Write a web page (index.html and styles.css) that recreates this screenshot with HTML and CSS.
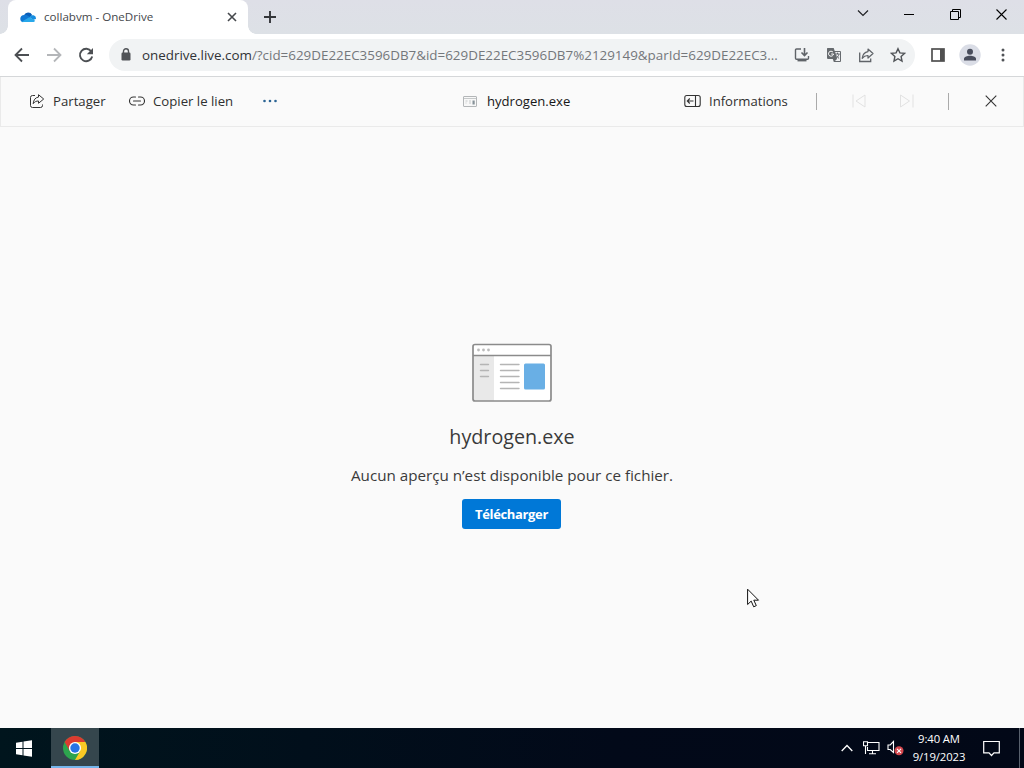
FILE: index.html
```html
<!DOCTYPE html>
<html lang="fr">
<head>
<meta charset="utf-8">
<title>collabvm - OneDrive</title>
<link rel="stylesheet" href="styles.css">
</head>
<body>
<div class="desktop">
  <header class="tabstrip">
    <div class="tab">
      <svg class="cloud" width="16" height="16" viewBox="0 0 16 16"><path d="M4 6.2A4.6 4.6 0 0 1 12.2 6L9 9 4 7z" fill="#0a5fb8"/><path d="M4.1 5.9c1.5-.3 2.6.1 3.7.8l3 1.9L3 13.2A3.6 3.6 0 0 1 .3 9.500C.3 7.500 2 5.900 4.100 5.900z" fill="#0f78d4"/><path d="M9.600 7.900c1.300-1.900 3.400-2 4.500-1.300A3 3 0 0 1 15.900 9.900l-3 1z" fill="#168de0"/><path d="M2 12.500l7.300-4.300 5.900 3.500c-.5.900-1.300 1.400-2.400 1.400H4c-.8 0-1.500-.2-2-.6z" fill="#28a8ea"/></svg>
      <span class="tab-title">collabvm - OneDrive</span>
      <svg class="tab-close" width="10" height="10" viewBox="0 0 10 10"><path d="M1 1l8 8M9 1L1 9" stroke="#45484c" stroke-width="1.600" fill="none"/></svg>
    </div>
    <svg class="new-tab" width="12" height="12" viewBox="0 0 12 12"><path d="M6 0v12M0 6h12" stroke="#34363a" stroke-width="1.900"/></svg>
    <div class="window-controls">
      <span><svg width="12" height="8" viewBox="0 0 12 8"><path d="M1 1.500l5 5 5-5" stroke="#202124" stroke-width="1.200" fill="none"/></svg></span>
      <span><svg width="10" height="10" viewBox="0 0 10 10"><path d="M0 5.500h10" stroke="#000"/></svg></span>
      <span><svg width="11" height="11" viewBox="0 0 11 11"><path d="M.5 2.500h8v8h-8zM2.500 2.500v-2h8v8h-2" stroke="#000" fill="none"/></svg></span>
      <span><svg width="11" height="11" viewBox="0 0 11 11"><path d="M.5.5l10 10M10.500.5l-10 10" stroke="#000" stroke-width="1.100"/></svg></span>
    </div>
  </header>

  <nav class="browser-bar">
    <div class="nav-buttons">
      <svg width="16" height="16" viewBox="0 0 16 16"><path d="M15 8H2M8 1.500L1.500 8 8 14.500" stroke="#4c4f53" stroke-width="1.800" fill="none"/></svg>
      <svg width="16" height="16" viewBox="0 0 16 16"><path d="M1 8h13M8 1.500L14.500 8 8 14.500" stroke="#b4b6b9" stroke-width="1.800" fill="none"/></svg>
      <svg width="16" height="16" viewBox="0 0 16 16"><path d="M13.300 4.500A6.200 6.200 0 1 0 14.200 9.500" stroke="#4c4f53" stroke-width="1.900" fill="none"/><path d="M15 1v6.200H8.800z" fill="#4c4f53"/></svg>
    </div>
    <div class="omnibox">
      <svg class="lock" width="10" height="13" viewBox="0 0 10 13"><rect x="0.500" y="4.500" width="9" height="8" rx="1.200" fill="#505357"/><path d="M2.500 5V3.300a2.500 2.500 0 0 1 5 0V5" stroke="#505357" stroke-width="1.400" fill="none"/></svg>
      <span class="url"><b>onedrive.live.com</b>/?cid=629DE22EC3596DB7&amp;id=629DE22EC3596DB7%2129149&amp;parId=629DE22EC3...</span>
      <div class="omni-actions">
        <svg width="16" height="16" viewBox="0 0 16 16"><path d="M7 2H2.500a1 1 0 0 0-1 1v8.200a1 1 0 0 0 1 1h11a1 1 0 0 0 1-1V9" stroke="#5f6368" stroke-width="1.400" fill="none"/><path d="M3.500 12h9v2.400h-9z" fill="#5f6368"/><path d="M10.500 1v7M7.500 5.500l3 3 3-3" stroke="#5f6368" stroke-width="1.600" fill="none"/></svg>
        <svg width="16" height="16" viewBox="0 0 16 16"><path d="M1.500 1h6.200l1 3h5.300a1 1 0 0 1 1 1v9a1 1 0 0 1-1 1H7.800l-1-3H2a1 1 0 0 1-1-1V1.500z" fill="#666a6e"/><path d="M9.200 5h4.800v9H9l2-2z" fill="#f0f1f3"/><path d="M9.300 7h4.400M11.500 5.700V7M13 7.200c-.4 1.800-1.600 3.100-3 4M10.300 8.500c.6 1.200 1.600 2.200 2.800 2.900" stroke="#5f6368" fill="none"/><path d="M7 5.200A2.500 2.500 0 1 0 7.500 7H5.200" stroke="#fff" fill="none"/></svg>
        <svg width="16" height="16" viewBox="0 0 16 16"><path d="M1.700 5.500v9h11v-3" stroke="#5f6368" stroke-width="1.300" fill="none"/><path d="M10 2l5 4.500-5 4.500V8.500C7.500 8.400 5.700 9.300 4.200 11.300 4.600 7.800 6.300 5.200 10 4.600z" stroke="#5f6368" stroke-width="1.200" stroke-linejoin="round" fill="none"/></svg>
        <svg width="16" height="16" viewBox="0 0 16 16"><path d="M8 1.700l1.900 4.200 4.600.5-3.400 3.100.9 4.500L8 11.700 4 14l.9-4.500L1.500 6.400l4.600-.5z" stroke="#505357" stroke-width="1.400" fill="none"/></svg>
      </div>
    </div>
    <svg class="side-panel" width="14" height="14" viewBox="0 0 14 14"><rect x="1" y="1" width="12" height="12" fill="#fff" stroke="#505050" stroke-width="1.700"/><path d="M9 1h4v12H9z" fill="#505050"/></svg>
    <svg class="avatar" width="22" height="22" viewBox="0 0 22 22"><circle cx="11" cy="11" r="10.700" fill="#dadde6"/><circle cx="11" cy="7.800" r="3" fill="#484d5c"/><path d="M5 16.500v-1.800c0-2 3.300-3 6-3s6 1 6 3v1.800z" fill="#484d5c"/></svg>
    <svg class="kebab" width="4" height="14" viewBox="0 0 4 14"><g fill="#505357"><circle cx="2" cy="2" r="1.500"/><circle cx="2" cy="7" r="1.500"/><circle cx="2" cy="12" r="1.500"/></g></svg>
  </nav>

  <main class="viewer">
    <div class="commands">
      <div class="commands-left">
        <svg width="16" height="16" viewBox="0 0 16 16"><path d="M6 2.500H3.500a2 2 0 0 0-2 2v8a2 2 0 0 0 2 2h8a2 2 0 0 0 2-2v-1" stroke="#333" fill="none"/><path d="M9.500 1.700L14.700 6l-5.200 4.300V8C7.300 7.900 5.700 8.700 4.200 10.700 4.500 7 6.300 4.500 9.500 4.100z" stroke="#333" stroke-linejoin="round" fill="none"/></svg>
        <span class="label share">Partager</span>
        <svg width="16" height="16" viewBox="0 0 16 16"><path d="M6.500 4h-2a4 4 0 0 0 0 8h2M9.500 4h2a4 4 0 0 1 0 8h-2M4.500 8h7" stroke="#333" stroke-width="1.100" stroke-linecap="round" fill="none"/></svg>
        <span class="label copy">Copier le lien</span>
        <svg width="16" height="4" viewBox="0 0 16 4"><g fill="#2b6494"><circle cx="2.500" cy="2" r="1.300"/><circle cx="8" cy="2" r="1.300"/><circle cx="13.500" cy="2" r="1.300"/></g></svg>
      </div>
      <div class="file-name">
        <svg width="14" height="11" viewBox="0 0 14 11"><rect x=".5" y=".5" width="13" height="10" rx=".5" fill="#f8f8f8" stroke="#b3b6b8"/><path d="M1 2.500h12M2.500 5h2M2.500 7h1M6 5h2M6 7h2" stroke="#b9bcbe" stroke-width=".8"/><path d="M9.500 4.500h2.200v4H9.500z" fill="#879299"/></svg>
        <span class="label file">hydrogen.exe</span>
      </div>
      <div class="commands-right">
        <svg width="17" height="14" viewBox="0 0 17 14"><rect x=".8" y="1.500" width="15.400" height="11" rx="2" stroke="#333" stroke-width="1.100" fill="none"/><path d="M11.500 1.500v11M9.500 7H3.500M5.800 4.500L3.300 7l2.500 2.500" stroke="#333" stroke-width="1.100" fill="none"/></svg>
        <span class="label info">Informations</span>
        <i class="divider"></i>
        <svg class="previous" width="16" height="16" viewBox="0 0 16 16"><path d="M2 1.500v13M14 2v12L5 8z" stroke="#e2e2e2" stroke-linejoin="round" fill="none"/></svg>
        <svg class="next" width="16" height="16" viewBox="0 0 16 16"><path d="M14 1.500v13M1.500 2v12l9-6z" stroke="#e2e2e2" stroke-linejoin="round" fill="none"/></svg>
        <i class="divider"></i>
        <svg class="close" width="12" height="12" viewBox="0 0 12 12"><path d="M.7.700l10.600 10.600M11.300.700L.700 11.300" stroke="#333" stroke-width="1.100"/></svg>
      </div>
    </div>
    <section class="preview">
      <svg class="exe" width="82" height="60" viewBox="0 0 82 60"><rect x="2" y="1.500" width="78" height="56.500" rx="2" fill="#fff"/><path d="M2 13h21v45H2z" fill="#e9e9e9"/><path d="M2 12.500h78" stroke="#8b8b8b" stroke-width="1.300"/><rect x="2" y="1.500" width="78" height="56.500" rx="2" fill="none" stroke="#8b8b8b" stroke-width="1.700"/><g fill="#bbb"><circle cx="7.500" cy="7" r="1.400"/><circle cx="12.500" cy="7" r="1.400"/><circle cx="17.500" cy="7" r="1.400"/></g><path d="M9.500 21.500h8M9.500 27.500h8M9.500 33.500h8M29.500 21.500H48M29.500 27.500H48M29.500 33.500H48M29.500 39.500H48M29.500 45.500H48" stroke="#b5b5b5" stroke-width="1.400" stroke-linecap="round"/><rect x="53" y="20.500" width="21" height="26" rx="1.500" fill="#69afe5"/></svg>
      <h1>hydrogen.exe</h1>
      <p>Aucun aperçu n’est disponible pour ce fichier.</p>
      <button>Télécharger</button>
    </section>
  </main>

  <footer class="taskbar">
    <svg class="start" width="16" height="17" viewBox="0 0 16 17"><path d="M0 2.700L6.500 1.700v6.300H0zM7.500 1.500L16 .300V8H7.500zM0 9h6.500v6.300L0 14.300zM7.500 9H16v7.700l-8.500-1.200z" fill="#fff"/></svg>
    <div class="chrome-task">
      <svg width="24" height="24" viewBox="0 0 24 24"><circle cx="12" cy="12" r="12" fill="#2da44e"/><path d="M1.600 6A12 12 0 0 1 22.400 6H12L6.800 15z" fill="#dc3b30"/><path d="M22.400 6A12 12 0 0 1 12 24l5.200-9L12 6z" fill="#fbc924"/><circle cx="12" cy="12" r="6.100" fill="#fff"/><circle cx="12" cy="12" r="4.700" fill="#2674e6"/></svg>
    </div>
    <div class="tray">
      <svg class="chevron" width="12" height="8" viewBox="0 0 12 8"><path d="M.7 7L6 1.500 11.300 7" stroke="#fff" stroke-width="1.300" fill="none"/></svg>
      <svg class="network" width="17" height="14" viewBox="0 0 17 14"><path d="M5 1.500h11v8H4.500V6M9.500 9.500v3M6 12.800h7M.5.700h4v4h-4zM2.500 5v8" stroke="#fff" stroke-width="1.100" fill="none"/></svg>
      <svg class="volume" width="17" height="16" viewBox="0 0 17 16"><path d="M1 5h2.200L6.500 1.500v11L3.200 9.500H1z" stroke="#fff" stroke-width="1.100" fill="none"/><circle cx="12" cy="10.800" r="4.500" fill="#d4474d"/><path d="M10 8.800l4 4M14 8.800l-4 4" stroke="#fff" stroke-width="1.100"/></svg>
      <div class="clock"><span class="time">9:40 AM</span><span class="date">9/19/2023</span></div>
      <svg class="notice" width="17" height="17" viewBox="0 0 17 17"><path d="M.700 1.500h15.600v11.300h-5.300L8.500 15.500 6 12.800H.700z" stroke="#fff" stroke-width="1.200" fill="none"/></svg>
      <i class="show-desktop"></i>
    </div>
  </footer>
  <svg class="pointer" width="13" height="21" viewBox="0 0 13 21"><path d="M.600 1.200v15.300l3.600-3.400 2.500 5.700 2.600-1.200-2.500-5.400h4.700z" fill="#fff" stroke="#111" stroke-width="1"/></svg>
</div>
</body>
</html>
```

FILE: styles.css
```css
* { box-sizing: border-box; }
body { margin: 0; overflow: hidden; font-family: "Open Sans", "Noto Sans", sans-serif; }
svg { display: block; flex: none; }
.desktop { position: relative; width: 1024px; height: 768px; display: flex; flex-direction: column; background: #fafafa; }

.tabstrip { height: 34px; display: flex; align-items: center; padding-left: 8px; background: linear-gradient(#dedfe7, #dde1e6); }
.tab { position: relative; width: 240px; height: 34px; display: flex; align-items: center; padding: 0 11px 1px 12px; background: #fff; border-radius: 8px 8px 0 0; }
.tab::before, .tab::after { content: ""; position: absolute; bottom: 0; width: 8px; height: 8px; }
.tab::before { left: -8px; background: radial-gradient(circle at 0 0, transparent 7.500px, #fff 8px); }
.tab::after { right: -8px; background: radial-gradient(circle at 100% 0, transparent 7.500px, #fff 8px); }
.tab-title { margin-left: 8px; flex: 1; white-space: nowrap; font-size: 11.600px; color: #45484c; }
.new-tab { margin-left: 16px; }
.window-controls { display: flex; margin-left: auto; margin-bottom: 6px; }
.window-controls span { width: 46px; display: flex; justify-content: center; }

.browser-bar { height: 43px; display: flex; align-items: center; padding: 0 0 1px 14px; background: #fff; border-bottom: 1px solid #d5d7d9; }
.nav-buttons { display: flex; gap: 16px; width: 95px; }
.omnibox { width: 806px; height: 32px; display: flex; align-items: center; padding: 0 9px 0 12px; border-radius: 16px; background: #f1f3f4; }
.url { margin-left: 11px; white-space: nowrap; font-size: 13.400px; color: #74777b; }
.url b { font-weight: 400; color: #303236; }
.omni-actions { display: flex; gap: 16px; margin-left: auto; }
.side-panel { margin-left: 16px; }
.avatar { margin-left: 14px; }
.kebab { margin-left: 20px; }

.viewer { height: 651px; display: flex; flex-direction: column; }
.commands { height: 50px; display: flex; align-items: center; border: 1px solid #eaeaea; border-top: 0; padding: 0 0 1px 28px; }
.commands-left { width: 434px; display: flex; align-items: center; }
.label { white-space: nowrap; font-size: 13.200px; color: #303030; margin-left: 8px; }
.share { width: 76px; }
.copy { width: 109px; }
.file-name { width: 221px; display: flex; align-items: center; }
.file { margin-left: 10px; color: #171717; font-size: 13.100px; }
.commands-right { display: flex; align-items: center; }
.info { width: 107px; font-size: 13.100px; }
.divider { width: 1px; height: 17px; background: #aaa; }
.previous { margin-left: 34px; }
.next { margin: 0 33px 0 32px; }
.close { margin-left: 36px; }
.preview { height: 601px; display: flex; flex-direction: column; align-items: center; padding-top: 216px; }
h1 { margin: 20px 0 0; font-size: 19.700px; line-height: 28px; font-weight: 400; color: #3a3a3a; }
p { margin: 12px 0 0; font-size: 15.200px; line-height: 24px; color: #3a3a3a; white-space: nowrap; }
button { width: 99px; height: 30px; margin: 12px 1px 0 0; padding: 0; border: 0; border-radius: 3px; background: #0078d7; color: #fff; font-family: inherit; font-size: 13px; font-weight: 700; letter-spacing: -.35px; }

.taskbar { height: 40px; display: flex; align-items: center; background: linear-gradient(90deg, #00151d, #020919 60%, #020817); color: #fff; }
.start { margin: 0 19px 0 16px; }
.chrome-task { width: 48px; height: 40px; display: flex; justify-content: center; align-items: center; padding-top: 2px; background: #35464d; border-bottom: 2px solid #75b6ec; }
.tray { height: 40px; display: flex; align-items: center; margin-left: auto; }
.chevron { margin-right: 10px; }
.network { margin-right: 7px; }
.clock { width: 70px; margin-right: 9px; display: flex; flex-direction: column; align-items: center; font-size: 11.300px; line-height: 18px; white-space: nowrap; letter-spacing: -.1px; }
.show-desktop { width: 5px; height: 40px; margin-left: 19px; border-left: 1px solid #59616d; }
.pointer { position: absolute; left: 747px; top: 588px; }
```
